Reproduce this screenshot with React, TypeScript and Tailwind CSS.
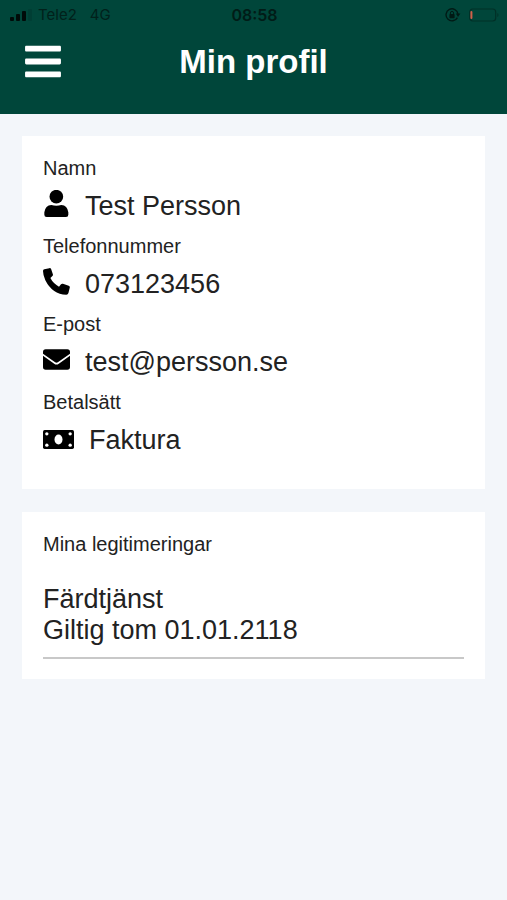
import type { ReactNode } from "react";
import { FaBars } from "react-icons/fa";

function StatusBar() {
  return (
    <div className="grid h-[30px] grid-cols-3 items-center pl-[10px] pr-[8px] font-['Inter',sans-serif] text-[15px] leading-[20px]">
      <div className="flex items-center text-[#01211b]">
        <svg viewBox="0 0 23 12" className="mr-[5px] h-3 w-[23px]" aria-hidden="true">
          <rect x="0" y="8" width="4" height="4" rx="1" fill="#000b09" />
          <rect x="6" y="5" width="4" height="7" rx="1" fill="#000b09" />
          <rect x="12" y="2" width="4" height="10" rx="1" fill="#000b09" />
          <rect x="18" y="0" width="4" height="12" rx="1" fill="#003e34" />
        </svg>
        <span>Tele2</span>
        <span className="ml-[13px]">4G</span>
      </div>
      <time className="text-center text-[16px] font-semibold text-[#011c17]">08:58</time>
      <div className="flex items-center justify-end gap-2">
        <svg viewBox="0 0 16 14" className="h-[14px] w-4" fill="none" aria-hidden="true">
          <path d="M12.4 9.6A6 6 0 1 1 13 6" stroke="#001a15" strokeWidth="1.4" />
          <path d="M10.8 5.6h4.6L13 9z" fill="#001a15" />
          <rect x="4.4" y="6" width="5.2" height="4.2" rx="0.8" fill="#001a15" />
          <path d="M5.4 6.4V5a1.6 1.6 0 0 1 3.2 0v1.4" stroke="#001a15" />
        </svg>
        <svg viewBox="0 0 30 14" className="h-[14px] w-[30px]" fill="none" aria-hidden="true">
          <rect x="0.7" y="1" width="26" height="12" rx="3" stroke="#003027" strokeWidth="1.2" />
          <rect x="1.4" y="3" width="2" height="8" rx="1" fill="#d0604a" />
          <path d="M28.4 5c1.4.5 1.4 3.5 0 4z" fill="#003027" />
        </svg>
      </div>
    </div>
  );
}

function UserIcon() {
  return (
    <svg viewBox="0 0 81 81" className="size-[27px]" fill="currentColor" aria-hidden="true">
      <circle cx="40" cy="20" r="20.5" />
      <path d="M25 45q15 5 30 0 18 1 21 22v7q0 7-7 7H11q-7 0-7-7v-7q3-21 21-22Z" />
    </svg>
  );
}

function PhoneIcon() {
  return (
    <svg viewBox="0 0 81 81" className="size-[27px]" fill="currentColor" aria-hidden="true">
      <path d="M4 4 19 .4q4-.6 5.600 3l5 15q1 3.400-1.400 5.800l-6 6Q30 46 48 56l6-7q2.400-2.600 5.800-1.400L77 53q4 1.600 3.400 5.400L76.300 75Q75 80.500 70 80.500 28 79 7 37 0 21 0 9q0-4 4-5Z" />
    </svg>
  );
}

function MailIcon() {
  return (
    <svg viewBox="0 0 81 81" className="size-[27px]" aria-hidden="true">
      <rect y="10" width="81" height="61" rx="8" fill="currentColor" />
      <path d="M-2 25 35 51q5.500 4 11 0L83 25" fill="none" stroke="#fff" strokeWidth="5" />
    </svg>
  );
}

function CashIcon() {
  return (
    <svg viewBox="0 -12 93 69" className="h-[23px] w-[31px]" aria-hidden="true">
      <rect width="93" height="57" rx="5" fill="currentColor" />
      <g fill="#fff">
        <ellipse cx="46.500" cy="28.500" rx="12" ry="15" />
        <circle cx="11.500" cy="11.500" r="5" />
        <circle cx="81.500" cy="11.500" r="5" />
        <circle cx="11.500" cy="45.500" r="5" />
        <circle cx="81.500" cy="45.500" r="5" />
      </g>
    </svg>
  );
}

function Field({ label, icon, children }: { label: string; icon: ReactNode; children: ReactNode }) {
  return (
    <div>
      <dt className="text-[20px] leading-[30px]">{label}</dt>
      <dd className="flex items-center gap-[15px] text-[27px] leading-[46px]">
        <span className="flex min-w-[27px] justify-center pb-[6px] text-black">{icon}</span>
        {children}
      </dd>
    </div>
  );
}

export default function App() {
  return (
    <div className="min-h-screen bg-[#f3f6fa] font-['Liberation_Sans',Arial,sans-serif] text-[#222222]">
      <header className="bg-[#00463a] pb-[29px]">
        <StatusBar />
        <div className="grid h-[55px] grid-cols-[36px_1fr_36px] items-center px-[25px] pb-[2px] pt-[10px]">
          <button type="button" aria-label="Meny" className="text-white">
            <FaBars className="h-[41px] w-9" />
          </button>
          <h1 className="text-center text-[33px] font-bold leading-[40px] text-white">Min profil</h1>
        </div>
      </header>

      <main className="flex flex-col gap-[23px] px-[22px] pt-[22px]">
        <section className="bg-white px-[21px] pb-[26px] pt-[17px]">
          <dl className="flex flex-col gap-[2px]">
            <Field label="Namn" icon={<UserIcon />}>
              Test Persson
            </Field>
            <Field label="Telefonnummer" icon={<PhoneIcon />}>
              073123456
            </Field>
            <Field label="E-post" icon={<MailIcon />}>
              test@persson.se
            </Field>
            <Field label="Betalsätt" icon={<CashIcon />}>
              Faktura
            </Field>
          </dl>
        </section>

        <section className="bg-white px-[21px] pb-5 pt-[17px]">
          <h2 className="text-[20px] leading-[30px]">Mina legitimeringar</h2>
          <div className="mt-[25px] border-b-2 border-[#c8c8c8] pb-[11px] text-[27px] leading-[31px]">
            <p>Färdtjänst</p>
            <p>Giltig tom 01.01.2118</p>
          </div>
        </section>
      </main>
    </div>
  );
}
